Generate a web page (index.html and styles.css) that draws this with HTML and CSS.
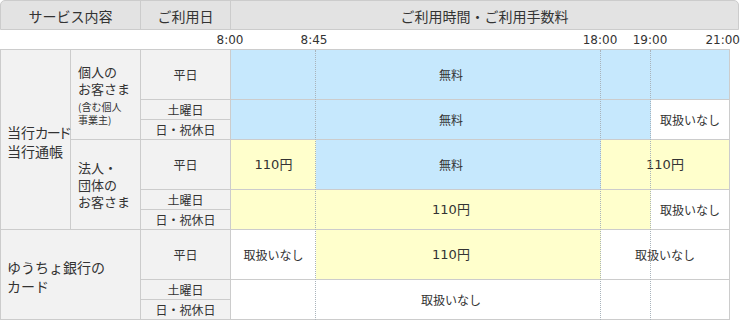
FILE: index.html
```html
<!DOCTYPE html>
<html lang="ja">
<head>
<meta charset="utf-8">
<title>ご利用時間・ご利用手数料</title>
<link rel="stylesheet" href="styles.css">
</head>
<body>
<div class="sheet">
  <div class="head">
    <div class="hcell hc-service">サービス内容</div>
    <div class="hcell hc-day">ご利用日</div>
    <div class="hcell hc-time">ご利用時間・ご利用手数料</div>
  </div>
  <div class="axis">
    <span class="tick num t-800">8:00</span>
    <span class="tick num t-845">8:45</span>
    <span class="tick num t-1800">18:00</span>
    <span class="tick num t-1900">19:00</span>
    <span class="tick num t-2100">21:00</span>
  </div>
  <div class="grid">
    <!-- row 1 -->
    <div class="cell label group r6"><div class="gtxt">当行<span class="kana">カード</span><br>当行通帳</div></div>
    <div class="cell label sub r3"><div class="stxt">個人の<br>お客さま<span class="note">(含む個人<br>事業主)</span></div></div>
    <div class="cell label day">平日</div>
    <div class="cell blue c4 end mid-wide">無料</div>
    <!-- row 2 -->
    <div class="cell label day">土曜日</div>
    <div class="cell blue c3 r2 mid-left">無料</div>
    <div class="cell white r2 end">取扱いなし</div>
    <!-- row 3 -->
    <div class="cell label day">日・祝休日</div>
    <!-- row 4 -->
    <div class="cell label sub r3"><div class="stxt">法人・<br>団体の<br>お客さま</div></div>
    <div class="cell label day">平日</div>
    <div class="cell yellow num">110円</div>
    <div class="cell blue mid-col">無料</div>
    <div class="cell yellow c2 end num">110円</div>
    <!-- row 5 -->
    <div class="cell label day">土曜日</div>
    <div class="cell yellow c3 r2 mid-left num">110円</div>
    <div class="cell white r2 end">取扱いなし</div>
    <!-- row 6 -->
    <div class="cell label day">日・祝休日</div>
    <!-- row 7 -->
    <div class="cell label group c2 r3"><div class="gtxt">ゆうちょ銀行の<br>カード</div></div>
    <div class="cell label day">平日</div>
    <div class="cell white">取扱いなし</div>
    <div class="cell yellow mid-col num">110円</div>
    <div class="cell white c2 end">取扱いなし</div>
    <!-- row 8 -->
    <div class="cell label day">土曜日</div>
    <div class="cell white c4 r2 end mid-wide">取扱いなし</div>
    <!-- row 9 -->
    <div class="cell label day">日・祝休日</div>

    <div class="vline v-845"></div>
    <div class="vline v-1800"></div>
    <div class="vline v-1900"></div>
  </div>
</div>
</body>
</html>
```

FILE: styles.css
```css
html, body {
  margin: 0;
  padding: 0;
  background: #ffffff;
}

body {
  font-family: "Noto Sans CJK JP", "DejaVu Sans", sans-serif;
  color: #333333;
}

.sheet {
  width: 740px;
}

/* ---------- header ---------- */
.head {
  box-sizing: border-box;
  display: flex;
  width: 739px;
  height: 30px;
  background: #e3e3e3;
  border: 1px solid #cccccc;
  border-radius: 5px 5px 0 0;
}

.hcell {
  box-sizing: border-box;
  display: flex;
  align-items: center;
  justify-content: center;
  font-size: 14px;
  line-height: 18px;
  padding-top: 1px;
}

.hc-service {
  width: 140px;
  border-right: 1px solid #cccccc;
}

.hc-day {
  width: 90px;
  border-right: 1px solid #cccccc;
}

.hc-time {
  flex: 1;
}

/* ---------- time axis ---------- */
.axis {
  position: relative;
  height: 19px;
}

.tick {
  position: absolute;
  top: 2px;
  font-size: 12px;
  line-height: 17px;
  transform: translateX(-50%);
}

.t-800 { left: 230px; }
.t-845 { left: 314px; }
.t-1800 { left: 600px; }
.t-1900 { left: 650px; }
.t-2100 { left: auto; right: 0; transform: none; }

.num {
  font-family: "DejaVu Sans", "Noto Sans CJK JP", sans-serif;
}

/* ---------- body grid ---------- */
.grid {
  position: relative;
  display: grid;
  grid-template-columns: 70px 70px 90px 85px 285px 50px 79px;
  grid-template-rows: 50px 20px 20px 50px 20px 20px 50px 20px 20px;
  width: max-content;
  border-top: 1px solid #cccccc;
  border-left: 1px solid #cccccc;
}

.cell {
  box-sizing: border-box;
  display: flex;
  align-items: center;
  justify-content: center;
  border-bottom: 1px solid #cccccc;
  font-size: 12px;
  line-height: 16px;
  white-space: nowrap;
}

.cell.num {
  font-size: 13px;
}

.label {
  background: #f2f2f2;
  border-right: 1px solid #cccccc;
}

.day {
  padding-top: 1px;
}

.group {
  justify-content: flex-start;
  padding: 4px 0 0 6px;
}

.gtxt {
  font-size: 14px;
  line-height: 19px;
}

.kana {
  font-feature-settings: "palt";
  letter-spacing: -1px;
}

.sub {
  justify-content: flex-start;
  padding-left: 7px;
}

.stxt {
  font-size: 13px;
  line-height: 17px;
}

.note {
  display: block;
  margin-top: 3px;
  font-size: 10px;
  line-height: 13px;
}

.blue { background: #c6e8fd; }
.yellow { background: #ffffcc; }
.white { background: #ffffff; }

.end {
  border-right: 1px solid #cccccc;
}

.c2 { grid-column: span 2; }
.c3 { grid-column: span 3; }
.c4 { grid-column: span 4; }
.r2 { grid-row: span 2; }
.r3 { grid-row: span 3; }
.r6 { grid-row: span 6; }

.mid-wide { padding-right: 58px; }
.mid-left { padding-left: 20px; }
.mid-col { padding-right: 15px; }

/* dotted time guides drawn over the cells */
.vline {
  position: absolute;
  top: 0;
  bottom: 0;
  width: 0;
  border-left: 1px dotted #a9b3bb;
  pointer-events: none;
}

.v-845 { left: 314px; }
.v-1800 { left: 599px; }
.v-1900 { left: 649px; }
```
